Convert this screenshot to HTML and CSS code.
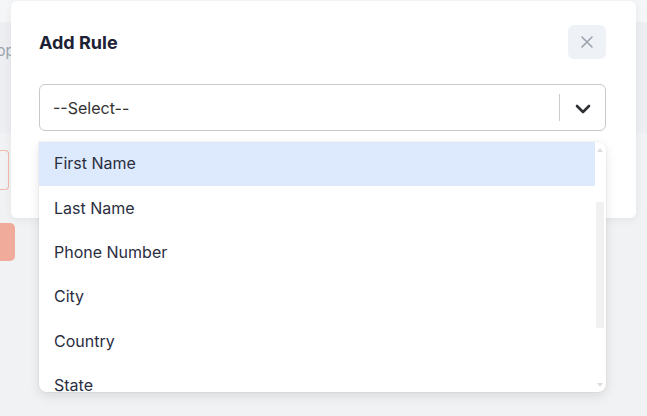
FILE: index.html
```html
<!DOCTYPE html>
<html lang="en">
<head>
    <meta charset="UTF-8">
    <meta name="viewport" content="width=device-width, initial-scale=1.0">
    <title>Add Rule</title>
    <link rel="stylesheet" href="styles.css">
</head>
<body>
    <div class="page">
        <div class="page-top"></div>
        <div class="page-band">
            <span class="band-text">Shop</span>
        </div>
        <div class="page-body">
            <div class="ghost-input"></div>
            <div class="ghost-button"></div>
        </div>
    </div>

    <div class="modal">
        <div class="modal-header">
            <div class="modal-title">Add Rule</div>
            <button class="close-btn" aria-label="Close">
                <svg width="14" height="14" viewBox="0 0 14 14">
                    <path d="M2 2 L12 12 M12 2 L2 12" stroke="#9aa3ad" stroke-width="1.6" stroke-linecap="round" fill="none"/>
                </svg>
            </button>
        </div>

        <div class="select">
            <div class="select-value">--Select--</div>
            <div class="select-sep"></div>
            <div class="select-arrow">
                <svg width="16" height="10" viewBox="0 0 16 10">
                    <path d="M2 2 L8 8 L14 2" stroke="#2f3033" stroke-width="2.6" stroke-linecap="round" stroke-linejoin="round" fill="none"/>
                </svg>
            </div>
        </div>

        <div class="menu">
            <div class="menu-list">
                <div class="option active">First Name</div>
                <div class="option">Last Name</div>
                <div class="option">Phone Number</div>
                <div class="option">City</div>
                <div class="option">Country</div>
                <div class="option">State</div>
            </div>
            <div class="scrollbar">
                <span class="arrow-up"></span>
                <div class="thumb"></div>
                <span class="arrow-down"></span>
            </div>
        </div>
    </div>
</body>
</html>
```

FILE: styles.css
```css
body {
    margin: 0;
    font-family: Inter, "Noto Sans", sans-serif;
    background-color: #f1f2f4;
    overflow: hidden;
}

/* page behind the modal */
.page {
    height: 416px;
    display: flex;
    flex-direction: column;
}

.page-top {
    height: 22px;
    background-color: #f5f6f8;
}

.page-band {
    height: 111px;
    background-color: #eceef1;
    display: flex;
    align-items: flex-start;
}

.band-text {
    margin-top: 19px;
    margin-left: -22px;
    font-size: 15px;
    color: #9aa3af;
}

.page-body {
    display: flex;
    flex-direction: column;
    padding-top: 17px;
}

.ghost-input {
    width: 10px;
    height: 38px;
    margin-left: -2px;
    border: 1px solid #f2b8aa;
    border-left: none;
    border-radius: 0 4px 4px 0;
}

.ghost-button {
    width: 15px;
    height: 38px;
    margin-top: 33px;
    background-color: #f0ab9b;
    border-radius: 0 5px 5px 0;
}

/* modal */
.modal {
    position: absolute;
    top: 1px;
    left: 11px;
    width: 625px;
    height: 217px;
    box-sizing: border-box;
    padding: 24px 30px 0 28px;
    background-color: #fff;
    border-radius: 6px;
    box-shadow: 0 2px 10px rgba(0, 0, 0, 0.06);
}

.modal-header {
    display: flex;
    justify-content: space-between;
    align-items: center;
    height: 34px;
}

.modal-title {
    font-size: 18px;
    font-weight: 700;
    color: #1d2134;
}

.close-btn {
    width: 38px;
    height: 34px;
    border: none;
    border-radius: 6px;
    background-color: #eef2f7;
    display: flex;
    align-items: center;
    justify-content: center;
    padding: 0;
}

.select {
    margin-top: 25px;
    height: 47px;
    box-sizing: border-box;
    border: 1px solid #c9c9c9;
    border-radius: 6px;
    display: flex;
    align-items: center;
}

.select-value {
    flex: 1;
    padding-left: 13px;
    font-size: 16px;
    color: #333;
}

.select-sep {
    width: 1px;
    height: 27px;
    background-color: #cccccc;
}

.select-arrow {
    width: 45px;
    display: flex;
    justify-content: center;
    padding-top: 2px;
}

/* dropdown menu */
.menu {
    position: absolute;
    top: 141px;
    left: 28px;
    width: 567px;
    height: 250px;
    display: flex;
    background-color: #fff;
    border-radius: 0 8px 8px 8px;
    box-shadow: 0 4px 12px rgba(0, 0, 0, 0.1), 0 0 0 1px rgba(0, 0, 0, 0.03);
    overflow: hidden;
}

.menu-list {
    flex: 1;
    overflow: hidden;
}

.option {
    height: 44.4px;
    display: flex;
    align-items: center;
    padding-left: 15px;
    padding-bottom: 2px;
    box-sizing: border-box;
    font-size: 16px;
    color: #2a2e3f;
}

.option.active {
    background-color: #dde9fc;
}

.scrollbar {
    width: 11px;
    position: relative;
}

.thumb {
    position: absolute;
    top: 60px;
    left: 1px;
    width: 8px;
    height: 126px;
    background-color: #f1f1f1;
}

.arrow-up,
.arrow-down {
    position: absolute;
    left: 2px;
    width: 0;
    height: 0;
    border-left: 3.5px solid transparent;
    border-right: 3.5px solid transparent;
}

.arrow-up {
    top: 6px;
    border-bottom: 4px solid #dedede;
}

.arrow-down {
    bottom: 5px;
    border-top: 4px solid #dedede;
}
```
